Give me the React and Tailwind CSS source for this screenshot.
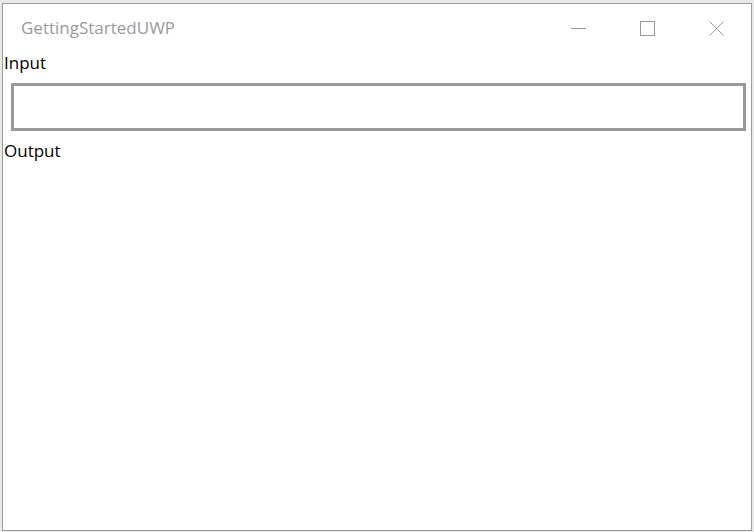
export default function App() {
  return (
    <div className="w-[754px] h-[532px] bg-[#e9e9e9] pl-[2px] pt-[3px] overflow-hidden" style={{ fontFamily: '"Open Sans", "Noto Sans", sans-serif' }}>
      <div className="w-[750px] h-[528px] bg-white border border-[#9c9c9c] flex flex-col">
        {/* Title bar */}
        <div className="h-[49px] flex items-start justify-between">
          <span className="pl-[18px] pt-[14px] text-[17px] leading-[20px] text-[#9a9a9a]">GettingStartedUWP</span>
          <div className="flex h-[48px]">
            <button className="w-[69px] h-full flex items-center justify-center">
              <svg width="15" height="15" viewBox="0 0 15 15">
                <line x1="0" y1="7.5" x2="15" y2="7.5" stroke="#999" strokeWidth="1" />
              </svg>
            </button>
            <button className="w-[69px] h-full flex items-center justify-center">
              <svg width="15" height="15" viewBox="0 0 15 15">
                <rect x="0.5" y="0.5" width="14" height="14" fill="none" stroke="#999" strokeWidth="1" />
              </svg>
            </button>
            <button className="w-[69px] h-full flex items-center justify-center">
              <svg width="15" height="15" viewBox="0 0 15 15">
                <path d="M0.5 0.5 L14.5 14.5 M14.5 0.5 L0.5 14.5" stroke="#999" strokeWidth="1" fill="none" />
              </svg>
            </button>
          </div>
        </div>

        {/* Content */}
        <div className="text-[17px] leading-[20px] text-black">
          <div className="pl-[1px]">Input</div>
          <input className="block mt-[10px] ml-[8px] w-[735px] h-[48px] border-[3px] border-[#999999] outline-none px-2" />
          <div className="pl-[1px] mt-[10px]">Output</div>
        </div>
      </div>
    </div>
  );
}
